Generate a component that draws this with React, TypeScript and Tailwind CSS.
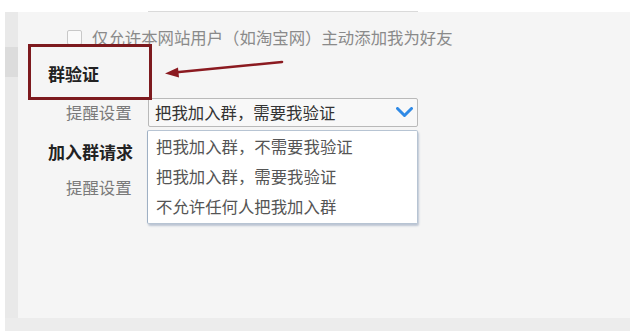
const font = { fontFamily: '"Noto Sans CJK SC", "Noto Sans", sans-serif' };

function Chevron() {
	return (
		<svg width="17" height="11" viewBox="0 0 17 11" fill="none">
			<path
				d="M1.5 1.5 L8.5 8.5 L15.5 1.5"
				stroke="#2f8ae6"
				strokeWidth="3"
				strokeLinecap="round"
				strokeLinejoin="round"
			/>
		</svg>
	);
}

function Arrow() {
	return (
		<svg
			className="absolute left-[142px] top-[43px]"
			width="130"
			height="27"
			viewBox="0 0 130 27"
			fill="none"
		>
			<path d="M122 7 L14 17.5" stroke="#8b1a20" strokeWidth="2.6" strokeLinecap="round" />
			<path d="M5 18.5 L18 12.5 L19 22.5 Z" fill="#8b1a20" />
		</svg>
	);
}

const options = ["把我加入群，不需要我验证", "把我加入群，需要我验证", "不允许任何人把我加入群"];

export default function App() {
	return (
		<div className="h-[331px] w-[630px] overflow-hidden bg-white" style={font}>
			<div className="h-[12px]">
				<div className="ml-[148px] h-full w-[270px] border-b border-[#dadada]" />
			</div>
			<div className="flex h-[319px] flex-col pl-[5px]">
				<div className="flex h-[306px]">
					<div className="w-[13px] bg-[#e9e9e9] pt-[35px]">
						<div className="h-[30px] bg-[#dcdcdc]" />
					</div>
					<div className="relative flex-1 bg-[#f5f5f5] pt-[10px] text-[16.4px] leading-none">
						<div className="flex h-[30px] items-center pl-[49px]">
							<span className="h-[15px] w-[15px] rounded-[2px] border border-[#c8c8c8] bg-[#fafafa]" />
							<span className="ml-[10px] text-[#8a8a8a]">
								仅允许本网站用户（如淘宝网）主动添加我为好友
							</span>
						</div>
						<div className="flex h-[42px] items-center pl-[30px] text-[17px] font-bold text-[#222]">
							群验证
						</div>
						<div className="mt-[4px] flex h-[29px] items-center pl-[48px]">
							<span className="w-[82px] text-[#7a7a7a]">提醒设置</span>
							<div className="flex h-full w-[270px] items-center justify-between rounded-[2px] border border-[#b9b9b9] bg-[#f8f8f8] pl-[6px] pr-[4px] text-[#333]">
								<span>把我加入群，需要我验证</span>
								<Chevron />
							</div>
						</div>
						<div className="mt-[9px] flex h-[30px] items-center pl-[30px] text-[17px] font-bold text-[#222]">
							加入群请求
						</div>
						<div className="mt-[6px] flex h-[30px] items-center pl-[48px] text-[#7a7a7a]">
							提醒设置
						</div>

						<div className="absolute left-[129px] top-[118px] w-[271px] rounded-[2px] border border-[#b7c4d3] border-l-[#9fb0c4] bg-white pb-[2px] shadow-[1px_2px_2px_rgba(120,140,170,0.45)]">
							{options.map((option) => (
								<div key={option} className="flex h-[30px] items-center pl-[8px] text-[#555]">
									{option}
								</div>
							))}
						</div>

						<div className="absolute left-[10px] top-[32px] h-[56px] w-[124px] border-[3px] border-[#7d1a1e]" />
						<Arrow />
					</div>
				</div>
				<div className="h-[13px] bg-[#ececec]" />
			</div>
		</div>
	);
}
